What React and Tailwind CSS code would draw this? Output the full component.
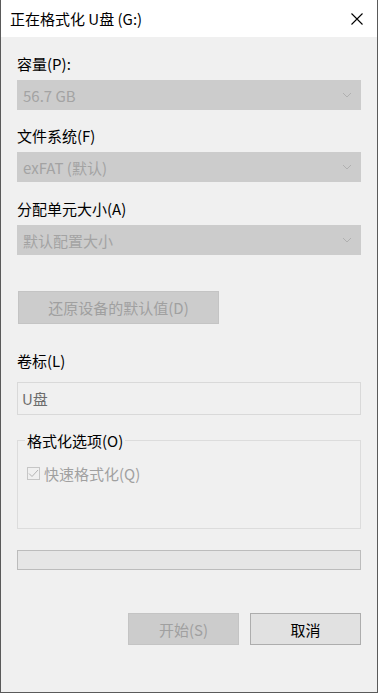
import React from "react";

const font = { fontFamily: '"Noto Sans CJK SC", "Noto Sans", sans-serif' };

function Chevron() {
  return (
    <svg width="10" height="6" viewBox="0 0 10 6" className="shrink-0">
      <path d="M1 1 L5 5 L9 1" fill="none" stroke="#b0b0b0" strokeWidth="1" />
    </svg>
  );
}

function Select({ value }) {
  return (
    <div className="mt-[7px] flex h-[30px] items-center justify-between border border-[#cccccc] bg-[#cccccc] pl-[5px] pr-[8px] text-[15px] leading-none text-[#a3a3a3]">
      <span>{value}</span>
      <Chevron />
    </div>
  );
}

function Label({ children, className }) {
  return (
    <div className={"flex h-[20px] items-center text-[15px] leading-none text-black " + className}>
      {children}
    </div>
  );
}

export default function App() {
  return (
    <div
      style={font}
      className="flex h-[693px] w-[378px] flex-col border-x border-b border-[#5a5a5a] bg-[#f0f0f0]"
    >
      <div className="flex h-[37px] shrink-0 items-center justify-between bg-white pl-[9px] pr-[14px]">
        <span className="text-[15px] leading-none text-black">正在格式化 U盘 (G:)</span>
        <svg width="12" height="12" viewBox="0 0 12 12">
          <path d="M0.5 0.5 L11.5 11.5 M11.5 0.5 L0.5 11.5" stroke="#000" strokeWidth="1.1" />
        </svg>
      </div>

      <div className="flex flex-col px-[16px]">
        <Label className="mt-[16px]">容量(P):</Label>
        <Select value="56.7 GB" />

        <Label className="mt-[15px]">文件系统(F)</Label>
        <Select value="exFAT (默认)" />

        <Label className="mt-[16px]">分配单元大小(A)</Label>
        <Select value="默认配置大小" />

        <div className="ml-[1px] mt-[36px] flex h-[33px] w-[201px] items-center justify-center border border-[#c4c4c4] bg-[#cccccc] text-[15px] leading-none text-[#a0a0a0]">
          还原设备的默认值(D)
        </div>

        <Label className="mt-[26px]">卷标(L)</Label>
        <div className="mt-[12px] flex h-[33px] items-center border border-[#d9d9d9] bg-[#f0f0f0] pl-[4px] text-[15px] leading-none text-[#6d6d6d]">
          U盘
        </div>

        <div className="relative mt-[25px] h-[89px] border border-[#dcdcdc]">
          <span className="absolute left-[7px] top-[-10px] bg-[#f0f0f0] px-[2px] text-[15px] leading-[20px] text-black">
            格式化选项(O)
          </span>
          <div className="ml-[9px] mt-[25px] flex items-center gap-[4px]">
            <div className="flex h-[13px] w-[13px] items-center justify-center border border-[#c6c6c6] bg-[#f0f0f0]">
              <svg width="11" height="9" viewBox="0 0 11 9">
                <path d="M1 4.5 L4 7.5 L10 1" fill="none" stroke="#b4b4b4" strokeWidth="1" />
              </svg>
            </div>
            <span className="text-[15px] leading-none text-[#a0a0a0]">快速格式化(Q)</span>
          </div>
        </div>

        <div className="mt-[21px] h-[20px] border border-[#bcbcbc] bg-[#e6e6e6]" />

        <div className="mt-[43px] flex justify-end gap-[11px]">
          <div className="flex h-[32px] w-[111px] items-center justify-center border border-[#c4c4c4] bg-[#cccccc] text-[15px] leading-none text-[#a0a0a0]">
            开始(S)
          </div>
          <div className="flex h-[32px] w-[111px] items-center justify-center border border-[#adadad] bg-[#e1e1e1] text-[15px] leading-none text-black">
            取消
          </div>
        </div>
      </div>
    </div>
  );
}
